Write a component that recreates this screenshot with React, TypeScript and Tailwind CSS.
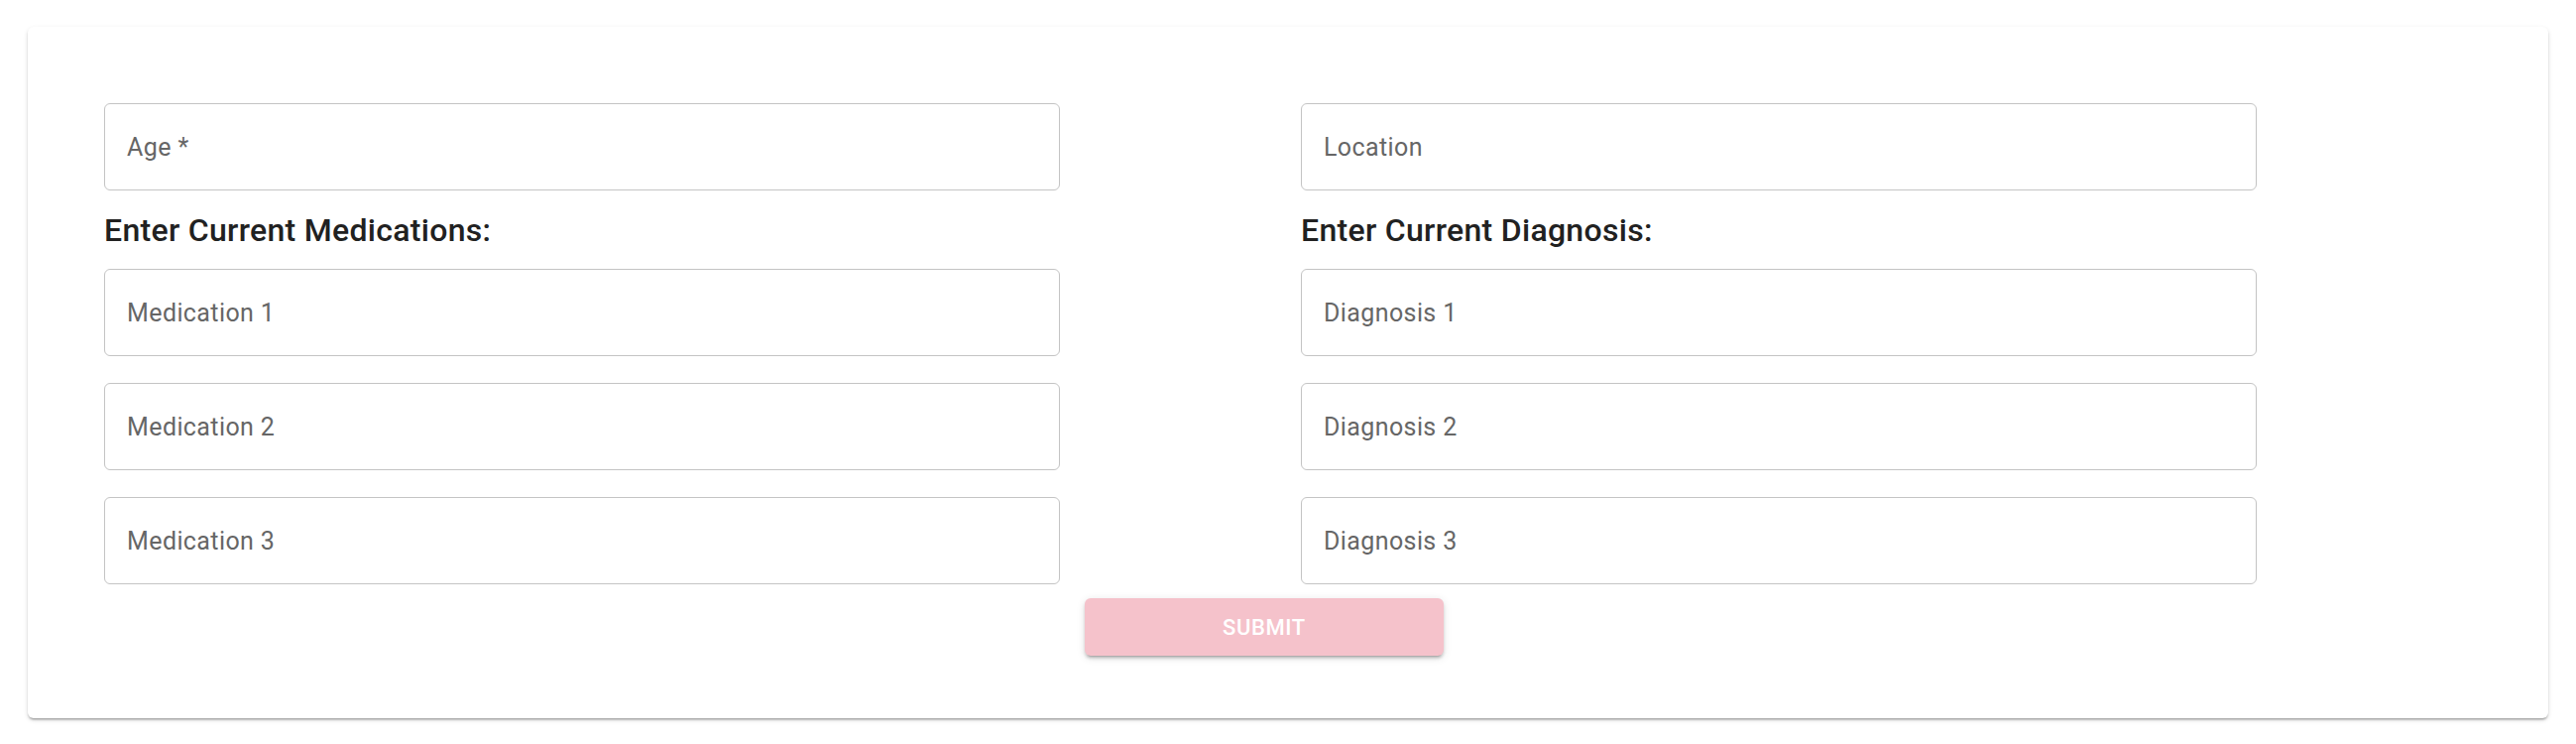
import React from "react";

function Field({ label }: { label: string }) {
  return (
    <div className="flex h-[88px] w-[964px] items-center rounded-[6px] border border-[#c4c4c4] bg-white pl-[22px] pt-[1px] text-[25px] tracking-[0.4px] text-[#666666]">
      {label}
    </div>
  );
}

function Column({
  first,
  heading,
  items,
}: {
  first: string;
  heading: string;
  items: string[];
}) {
  return (
    <div className="flex flex-col pl-[13px]">
      <Field label={first} />
      <div className="flex h-[79px] items-center text-[32px] font-medium tracking-[0.3px] text-[#212121]">
        {heading}
      </div>
      <div className="flex flex-col gap-[27px]">
        {items.map((i) => (
          <Field key={i} label={i} />
        ))}
      </div>
    </div>
  );
}

export default function App() {
  return (
    <div
      className="min-h-[750px] bg-white px-[28px] pt-[27px]"
      style={{ fontFamily: "Roboto, 'Noto Sans', Arial, sans-serif" }}
    >
      <div className="rounded-[6px] bg-white px-[64px] pb-[63px] pt-[77px] shadow-[0px_3px_2px_-2px_rgba(0,0,0,0.2),0px_2px_2px_0px_rgba(0,0,0,0.14),0px_2px_5px_0px_rgba(0,0,0,0.12)]">
        <div className="grid grid-cols-2">
          <Column
            first="Age *"
            heading="Enter Current Medications:"
            items={["Medication 1", "Medication 2", "Medication 3"]}
          />
          <Column
            first="Location"
            heading="Enter Current Diagnosis:"
            items={["Diagnosis 1", "Diagnosis 2", "Diagnosis 3"]}
          />
        </div>
        <div className="mt-[14px] pl-[1002px]">
          <button className="flex h-[58px] w-[362px] items-center justify-center rounded-[6px] bg-[#f5c2cb] text-[22px] font-medium uppercase tracking-[0.6px] text-white shadow-[0px_4px_2px_-3px_rgba(0,0,0,0.2),0px_3px_3px_0px_rgba(0,0,0,0.14),0px_2px_8px_0px_rgba(0,0,0,0.12)]">
            Submit
          </button>
        </div>
      </div>
    </div>
  );
}
